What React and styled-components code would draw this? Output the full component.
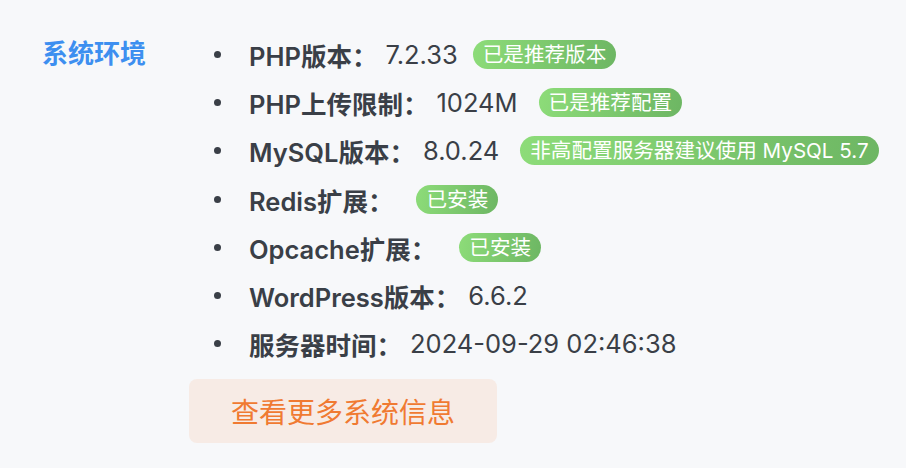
import React from 'react';
import styled, { createGlobalStyle } from 'styled-components';

const GlobalStyle = createGlobalStyle`
  html, body {
    margin: 0;
    padding: 0;
    background: #f7f8fa;
  }
  body {
    font-family: Inter, "Noto Sans CJK SC", sans-serif;
    color: #3a3f47;
  }
`;

const Section = styled.div`
  display: flex;
  align-items: flex-start;
  padding: 30px 0 0 42px;
`;

const SectionTitle = styled.div`
  width: 147px;
  flex-shrink: 0;
  font-size: 26px;
  line-height: 48px;
  font-weight: 600;
  color: #3d8ff0;
`;

const Body = styled.div`
  display: flex;
  flex-direction: column;
  align-items: flex-start;
`;

const List = styled.ul`
  list-style: none;
  margin: 0;
  padding: 0 0 0 25px;
`;

const Item = styled.li`
  display: flex;
  align-items: center;
  height: 48.3px;
  font-size: 25.5px;

  &::before {
    content: '';
    width: 7px;
    height: 7px;
    border-radius: 50%;
    background: #3a3f47;
    margin-right: 28px;
    flex-shrink: 0;
  }
`;

const Key = styled.span`
  font-weight: 600;
`;

const Value = styled.span`
  margin-left: 8px;
  font-weight: 400;
`;

const Badge = styled.span`
  margin-left: ${p => p.$gap}px;
  height: 29px;
  line-height: 29px;
  padding: 0 10px;
  border-radius: 15px;
  font-size: 20.6px;
  color: #fff;
  background: linear-gradient(100deg, #8ddc79 0%, #6db663 100%);
  white-space: nowrap;
`;

const MoreButton = styled.button`
  margin-top: 11px;
  width: 308px;
  height: 64px;
  border: none;
  border-radius: 8px;
  background: #f7ebe5;
  color: #f07a32;
  font-family: inherit;
  font-size: 28px;
  cursor: pointer;
`;

const rows = [
  { key: 'PHP版本：', value: '7.2.33', badge: '已是推荐版本', gap: 15 },
  { key: 'PHP上传限制：', value: '1024M', badge: '已是推荐配置', gap: 21 },
  { key: 'MySQL版本：', value: '8.0.24', badge: '非高配置服务器建议使用 MySQL 5.7', gap: 21 },
  { key: 'Redis扩展：', value: '', badge: '已安装', gap: 23 },
  { key: 'Opcache扩展：', value: '', badge: '已安装', gap: 23 },
  { key: 'WordPress版本：', value: '6.6.2' },
  { key: '服务器时间：', value: '2024-09-29 02:46:38' },
];

export default function App() {
  return (
    <>
      <GlobalStyle />
      <Section>
        <SectionTitle>系统环境</SectionTitle>
        <Body>
          <List>
            {rows.map(r => (
              <Item key={r.key}>
                <Key>{r.key}</Key>
                {r.value && <Value>{r.value}</Value>}
                {r.badge && <Badge $gap={r.gap}>{r.badge}</Badge>}
              </Item>
            ))}
          </List>
          <MoreButton>查看更多系统信息</MoreButton>
        </Body>
      </Section>
    </>
  );
}
